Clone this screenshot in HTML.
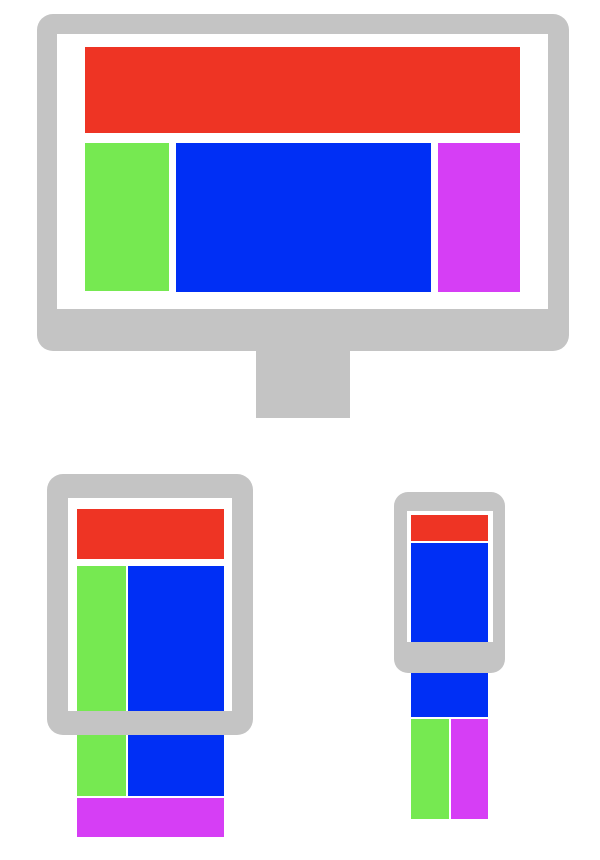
<!DOCTYPE html><html><head><style>
body{margin:0;width:600px;height:860px;background:#fff;position:relative;overflow:hidden}
div{position:absolute;box-sizing:border-box}
.r{background:#ee3424}.g{background:#76e951}.b{background:#002ff5}.m{background:#d63ef5}
.f{border-color:#c4c4c4;border-style:solid}
</style></head><body>
<!-- desktop -->
<div class="f" style="left:37px;top:14px;width:532px;height:337px;border-width:20px 21px 42px 20px;border-radius:16px;background:#fff"></div>
<div class="r" style="left:85px;top:47px;width:435px;height:86px"></div>
<div class="g" style="left:85px;top:143px;width:84px;height:148px"></div>
<div class="b" style="left:176px;top:143px;width:255px;height:149px"></div>
<div class="m" style="left:438px;top:143px;width:82px;height:149px"></div>
<div style="left:256px;top:350px;width:94px;height:68px;background:#c4c4c4"></div>
<!-- tablet -->
<div style="left:68px;top:498px;width:164px;height:213px;background:#fff"></div>
<div class="r" style="left:77px;top:509px;width:147px;height:50px"></div>
<div class="g" style="left:77px;top:566px;width:49px;height:230px"></div>
<div class="b" style="left:128px;top:566px;width:96px;height:230px"></div>
<div class="m" style="left:77px;top:798px;width:147px;height:39px"></div>
<div class="f" style="left:47px;top:474px;width:206px;height:261px;border-width:24px 21px 24px 21px;border-radius:16px"></div>
<!-- phone -->
<div style="left:407px;top:511px;width:86px;height:131px;background:#fff"></div>
<div class="r" style="left:411px;top:515px;width:77px;height:26px"></div>
<div class="b" style="left:411px;top:543px;width:77px;height:174px"></div>
<div class="g" style="left:411px;top:719px;width:38px;height:100px"></div>
<div class="m" style="left:451px;top:719px;width:37px;height:100px"></div>
<div class="f" style="left:394px;top:492px;width:111px;height:181px;border-width:19px 12px 31px 13px;border-radius:14px"></div>
</body></html>
